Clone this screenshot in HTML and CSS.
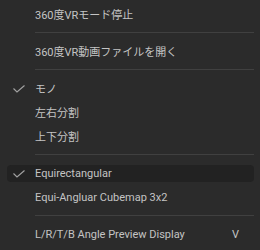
FILE: index.html
```html
<!DOCTYPE html>
<html lang="ja">
<head>
    <meta charset="UTF-8">
    <title>360度VR メニュー</title>
    <link rel="stylesheet" href="styles.css">
</head>
<body>
    <div class="menu">
        <div class="item"><span class="label">360度VRモード停止</span></div>
        <div class="sep"></div>
        <div class="item"><span class="label">360度VR動画ファイルを開く</span></div>
        <div class="sep"></div>
        <div class="item checked">
            <svg class="check" width="12" height="8" viewBox="0 0 12 8"><polyline points="0.5,3.5 4,7 11.5,0.5" /></svg>
            <span class="label">モノ</span>
        </div>
        <div class="item"><span class="label">左右分割</span></div>
        <div class="item"><span class="label">上下分割</span></div>
        <div class="sep"></div>
        <div class="item checked active">
            <svg class="check" width="12" height="8" viewBox="0 0 12 8"><polyline points="0.5,3.5 4,7 11.5,0.5" /></svg>
            <span class="label">Equirectangular</span>
        </div>
        <div class="item"><span class="label">Equi-Angluar Cubemap 3x2</span></div>
        <div class="sep"></div>
        <div class="item"><span class="label">L/R/T/B Angle Preview Display</span><span class="key">V</span></div>
    </div>
</body>
</html>
```

FILE: styles.css
```css
* {
    margin: 0;
    padding: 0;
    box-sizing: border-box;
}

body {
    background: #2b2b2b;
    width: 260px;
    height: 250px;
    overflow: hidden;
    font-family: Roboto, 'Noto Sans CJK JP', sans-serif;
    font-size: 11px;
    color: #c4c4c4;
}

.menu {
    padding: 2px 6px 0 7px;
    display: flex;
    flex-direction: column;
}

.item {
    position: relative;
    height: 24px;
    display: flex;
    align-items: center;
    padding-left: 28px;
    padding-right: 15px;
}

.item.active::before {
    content: '';
    position: absolute;
    left: 0;
    right: 0;
    top: 4px;
    bottom: 3px;
    background: #222222;
    border-radius: 4px;
}

.label,
.key {
    position: relative;
}

.check {
    position: absolute;
    left: 6px;
    top: 9px;
    fill: none;
    stroke: #a2a2a2;
    stroke-width: 1.1;
}

.key {
    margin-left: auto;
}

.sep {
    height: 13px;
    display: flex;
    align-items: center;
    padding-left: 28px;
}

.sep::after {
    content: '';
    flex: 1;
    height: 1px;
    background: #404040;
}
```
